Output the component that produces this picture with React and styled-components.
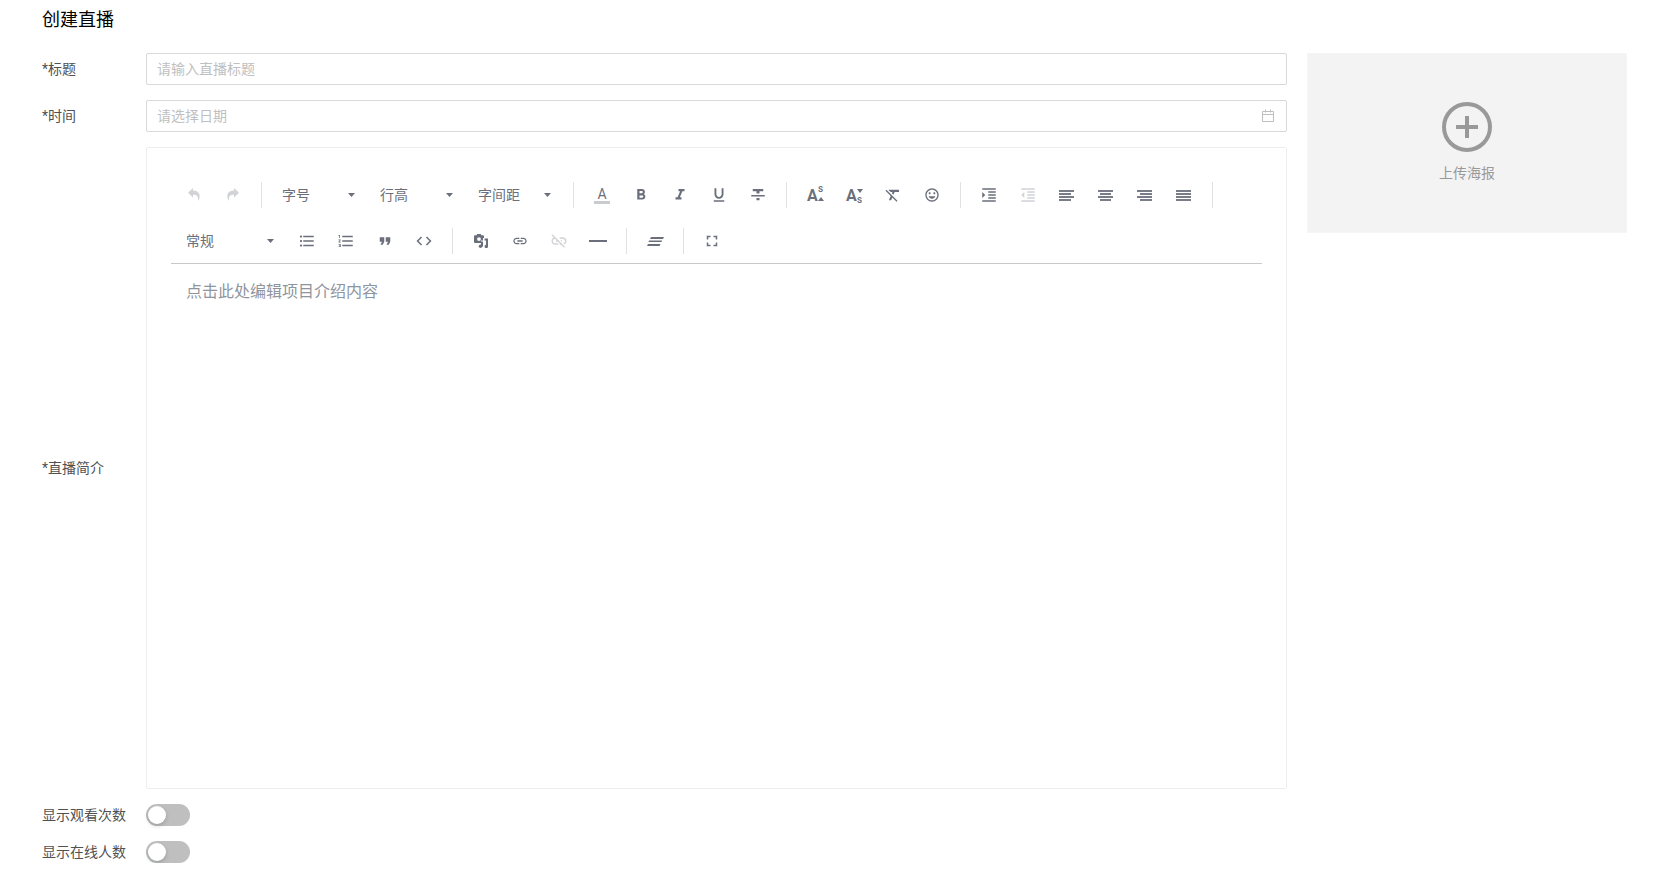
import { useState } from "react";
import styled, { createGlobalStyle } from "styled-components";
import {
  MdCode,
  MdFormatBold,
  MdFormatClear,
  MdFormatIndentDecrease,
  MdFormatIndentIncrease,
  MdFormatItalic,
  MdFormatListBulleted,
  MdFormatListNumbered,
  MdFormatUnderlined,
  MdFullscreen,
  MdInsertEmoticon,
  MdLink,
  MdLinkOff,
} from "react-icons/md";

const UndoIcon = () => (
  <svg width="12" height="14" viewBox="0 0 12 14" fill="currentColor">
    <path d="M5 0 0 4.700l5 4.700V6.700c3.600-.2 5.600 1.400 5 6.300C13.200 8.500 12 2.800 5 2.600z" />
  </svg>
);

const RedoIcon = () => (
  <svg width="12" height="14" viewBox="0 0 12 14" fill="currentColor">
    <path d="M7 0l5 4.700-5 4.700V6.700C3.400 6.500 1.400 8.100 2 13-1.200 8.500 0 2.800 7 2.600z" />
  </svg>
);

const TextColorIcon = () => (
  <svg width="18" height="18" viewBox="0 0 18 18" fill="currentColor">
    <text x="9" y="13" textAnchor="middle" fontSize="14" fontFamily="Roboto">A</text>
    <path d="M1 15h16v3H1z" opacity=".36" />
  </svg>
);

const StrikeIcon = () => (
  <svg width="18" height="18" viewBox="0 0 24 24" fill="currentColor">
    <path d="M10 19h4v-3h-4v3zM5 4v3h5v3h4V7h5V4H5zM3 14h18v-2H3v2z" />
  </svg>
);

const SuperIcon = () => (
  <svg width="20" height="24" viewBox="0 0 20 24" fill="currentColor">
    <text x="2" y="18" fontSize="16" fontWeight="700" fontFamily="Roboto">A</text>
    <text x="13" y="9" fontSize="10" fontWeight="500" fontFamily="Roboto">s</text>
    <path d="M13 18h6l-3-4z" />
  </svg>
);

const SubIcon = () => (
  <svg width="20" height="24" viewBox="0 0 20 24" fill="currentColor">
    <text x="2" y="18" fontSize="16" fontWeight="700" fontFamily="Roboto">A</text>
    <text x="13" y="20" fontSize="10" fontWeight="500" fontFamily="Roboto">s</text>
    <path d="M13 6h6l-3 4z" />
  </svg>
);

const alignRows = {
  left: [[0, 15], [0, 12], [0, 15], [0, 12]],
  center: [[0, 15], [2, 11], [0, 15], [2, 11]],
  right: [[0, 15], [3, 12], [0, 15], [3, 12]],
  justify: [[0, 15], [0, 15], [0, 15], [0, 15]],
};

const AlignIcon = ({ type }) => (
  <svg width="15" height="12" viewBox="0 0 15 12" fill="currentColor" opacity=".9">
    {alignRows[type].map(([x, w], i) => (
      <rect key={i} x={x} y={i * 3 + 1} width={w} height="2" />
    ))}
  </svg>
);

const QuoteIcon = () => (
  <svg width="18" height="18" viewBox="0 0 24 24" fill="currentColor">
    <path d="M6 17h3l2-4V7H5v6h3zm8 0h3l2-4V7h-6v6h3z" />
  </svg>
);

const MediaIcon = () => (
  <svg width="14" height="14" viewBox="0 0 14 14" fill="currentColor">
    <path
      fillRule="evenodd"
      d="M1 1.200h1.500L3.300 0h3.400l.8 1.200H9q1 0 1 1V4H9v2.500H7V9H1q-1 0-1-1V2.200q0-1 1-1zM5 3.200a1.900 1.900 0 1 0 0 3.800 1.900 1.900 0 0 0 0-3.800z"
    />
    <path d="M10.500 4.500H14v8a1.700 1.700 0 1 1-2-1.700V6.500h-1.500z" />
    <circle cx="6.500" cy="12.300" r="1.700" />
    <path d="M7 7.500h2v5H7z" />
  </svg>
);

const HrIcon = () => (
  <svg width="18" height="2" viewBox="0 0 18 2" fill="currentColor">
    <path d="M0 0h18v2H0z" />
  </svg>
);

const ClearIcon = () => (
  <svg width="18" height="10" viewBox="0 0 18 10" fill="currentColor">
    <path d="M5 1h13l-1 2H4zM3 4.500h13L15.500 6H2.500zM2 8h12.500l-1 2H1z" />
  </svg>
);

const CalendarIcon = () => (
  <svg width="14" height="14" viewBox="0 0 14 14" fill="none" stroke="currentColor">
    <path d="M1.500 2.500h11v10h-11zM1.500 5.500h11M4.500 .5v3M9.500 .5v3" />
  </svg>
);

const PlusCircle = () => (
  <svg width="50" height="50" viewBox="0 0 50 50" fill="none" stroke="currentColor" strokeWidth="4">
    <circle cx="25" cy="25" r="23" />
    <path d="M14 25h22M25 14v22" />
  </svg>
);

const tools = [
  { title: "撤销", icon: <UndoIcon />, disabled: true },
  { title: "重做", icon: <RedoIcon />, disabled: true },
  "|",
  { select: "字号", options: ["12", "14", "16", "18", "24"] },
  { select: "行高", options: ["1", "1.2", "1.5", "2"] },
  { select: "字间距", options: ["0", "1", "2", "4"] },
  "|",
  { title: "文字颜色", icon: <TextColorIcon /> },
  { title: "加粗", icon: <MdFormatBold /> },
  { title: "斜体", icon: <MdFormatItalic /> },
  { title: "下划线", icon: <MdFormatUnderlined /> },
  { title: "删除线", icon: <StrikeIcon /> },
  "|",
  { title: "上标", icon: <SuperIcon /> },
  { title: "下标", icon: <SubIcon /> },
  { title: "清除样式", icon: <MdFormatClear /> },
  { title: "表情", icon: <MdInsertEmoticon size={16} /> },
  "|",
  { title: "增加缩进", icon: <MdFormatIndentIncrease /> },
  { title: "减少缩进", icon: <MdFormatIndentDecrease />, disabled: true },
  { title: "居左", icon: <AlignIcon type="left" /> },
  { title: "居中", icon: <AlignIcon type="center" /> },
  { title: "居右", icon: <AlignIcon type="right" /> },
  { title: "两端", icon: <AlignIcon type="justify" /> },
  "|",
  { select: "常规", options: ["标题1", "标题2", "标题3"], wide: true },
  { title: "无序列表", icon: <MdFormatListBulleted /> },
  { title: "有序列表", icon: <MdFormatListNumbered /> },
  { title: "引用", icon: <QuoteIcon /> },
  { title: "代码", icon: <MdCode /> },
  "|",
  { title: "媒体", icon: <MediaIcon /> },
  { title: "链接", icon: <MdLink size={16} /> },
  { title: "取消链接", icon: <MdLinkOff />, disabled: true },
  { title: "水平线", icon: <HrIcon /> },
  "|",
  { title: "清除内容", icon: <ClearIcon /> },
  "|",
  { title: "全屏", icon: <MdFullscreen /> },
];

const Tool = ({ item }) => {
  if (item === "|") return <Separator />;
  if (item.select) {
    return (
      <Dropdown $wide={item.wide}>
        <select aria-label={item.select} defaultValue={item.select}>
          <option>{item.select}</option>
          {item.options.map((o) => (
            <option key={o}>{o}</option>
          ))}
        </select>
        <svg width="7" height="4" viewBox="0 0 7 4" fill="currentColor">
          <path d="M0 0h7L3.500 4z" />
        </svg>
      </Dropdown>
    );
  }
  return (
    <ToolButton type="button" aria-label={item.title} disabled={item.disabled}>
      {item.icon}
    </ToolButton>
  );
};

const App = () => {
  const [showViews, setShowViews] = useState(false);
  const [showOnline, setShowOnline] = useState(false);

  return (
    <Page>
      <GlobalStyle />
      <Title>创建直播</Title>
      <Content>
        <Form>
          <Row>
            <Label htmlFor="title">*标题</Label>
            <Field>
              <input id="title" type="text" placeholder="请输入直播标题" />
            </Field>
          </Row>
          <Row>
            <Label htmlFor="time">*时间</Label>
            <Field>
              <input id="time" type="text" placeholder="请选择日期" />
              <CalendarIcon />
            </Field>
          </Row>
          <Row>
            <Label htmlFor="intro">*直播简介</Label>
            <Editor>
              <Toolbar>
                {tools.map((item, i) => (
                  <Tool key={i} item={item} />
                ))}
              </Toolbar>
              <EditorContent id="intro" placeholder="点击此处编辑项目介绍内容" />
            </Editor>
          </Row>
          <Row>
            <Label htmlFor="views">显示观看次数</Label>
            <Switch
              id="views"
              type="checkbox"
              checked={showViews}
              onChange={(e) => setShowViews(e.target.checked)}
            />
          </Row>
          <Row>
            <Label htmlFor="online">显示在线人数</Label>
            <Switch
              id="online"
              type="checkbox"
              checked={showOnline}
              onChange={(e) => setShowOnline(e.target.checked)}
            />
          </Row>
        </Form>
        <Upload type="button">
          <PlusCircle />
          <span>上传海报</span>
        </Upload>
      </Content>
    </Page>
  );
};

const GlobalStyle = createGlobalStyle`
  * {
    box-sizing: border-box;
  }
  body {
    margin: 0;
    background: #fff;
    color: #515151;
    font-family: Roboto, "Noto Sans CJK SC", sans-serif;
    font-size: 14px;
  }
  input, select, textarea, button {
    font: inherit;
    color: inherit;
  }
`;

const Page = styled.main`
  padding: 0 40px 0 42px;
`;

const Title = styled.h1`
  margin: 0 0 13px;
  font-size: 18px;
  font-weight: 400;
  line-height: 40px;
  color: #000;
`;

const Content = styled.div`
  display: flex;
  align-items: flex-start;
  gap: 20px;
`;

const Form = styled.form`
  flex: 1;
  min-width: 0;
  display: flex;
  flex-direction: column;
  gap: 15px;
`;

const Row = styled.div`
  display: grid;
  grid-template-columns: 104px minmax(0, 1fr);
  align-items: center;
`;

const Label = styled.label`
  line-height: 22px;
`;

const Field = styled.div`
  display: flex;
  align-items: center;
  height: 32px;
  padding: 0 11px 0 10px;
  border: 1px solid #d9d9d9;
  border-radius: 2px;
  color: #bfbfbf;
  input {
    flex: 1;
    min-width: 0;
    height: 30px;
    padding: 0;
    border: 0;
    outline: 0;
    background: none;
    color: #515151;
    &::placeholder {
      color: #bfbfbf;
    }
  }
`;

const Editor = styled.div`
  padding: 24px;
  border: 1px solid #eee;
  border-radius: 2px;
`;

const Toolbar = styled.div`
  display: flex;
  flex-wrap: wrap;
  padding: 0 3px;
  box-shadow: inset 0 -1px 0 0 #c8c8c8;
  color: #6a6f7b;
`;

const ToolButton = styled.button`
  display: flex;
  align-items: center;
  justify-content: center;
  width: 39px;
  height: 36px;
  margin: 5px 0;
  padding: 0;
  border: 0;
  background: none;
  font-size: 18px;
  cursor: pointer;
  &:disabled {
    opacity: 0.3;
    cursor: default;
  }
`;

const Separator = styled.span`
  width: 1px;
  height: 26px;
  margin: 10px 8px 10px 9px;
  background: #e1e1e3;
`;

const Dropdown = styled.div`
  display: flex;
  align-items: center;
  width: ${(props) => (props.$wide ? "113px" : "98px")};
  height: 36px;
  margin: 5px 0;
  padding: 0 13px 0 12px;
  select {
    flex: 1;
    min-width: 0;
    height: 36px;
    padding: 0;
    border: 0;
    outline: 0;
    background: none;
    appearance: none;
  }
`;

const EditorContent = styled.textarea`
  display: block;
  width: 100%;
  height: 500px;
  padding: 16px 15px;
  border: 0;
  outline: 0;
  resize: none;
  font-size: 16px;
  line-height: 24px;
  &::placeholder {
    color: #8f959e;
  }
`;

const Switch = styled.input`
  appearance: none;
  width: 44px;
  height: 22px;
  margin: 0;
  padding: 2px;
  border-radius: 11px;
  background: #bfbfbf;
  cursor: pointer;
  &::before {
    content: "";
    display: block;
    width: 18px;
    height: 18px;
    border-radius: 9px;
    background: #fff;
    box-shadow: 0 2px 4px rgba(0, 35, 11, 0.2);
  }
  &:checked {
    background: #1890ff;
  }
  &:checked::before {
    margin-left: 22px;
  }
`;

const Upload = styled.button`
  display: flex;
  flex-direction: column;
  align-items: center;
  justify-content: center;
  gap: 10px;
  width: 320px;
  height: 180px;
  padding: 0;
  border: 1px solid #f5f5f5;
  background: #f3f3f3;
  color: #999;
  line-height: 22px;
  cursor: pointer;
`;

export default App;
